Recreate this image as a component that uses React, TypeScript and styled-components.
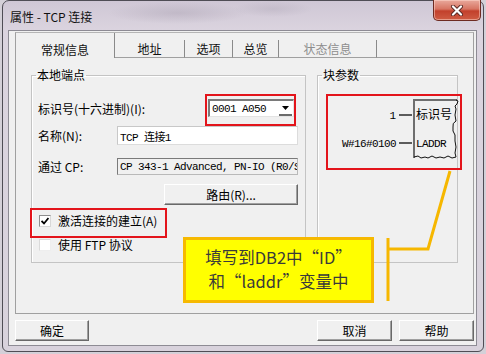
import React from 'react'
import styled, { createGlobalStyle } from 'styled-components'

const GlobalStyle = createGlobalStyle`
  html, body {
    margin: 0;
    padding: 0;
  }
  body {
    width: 486px;
    height: 354px;
    overflow: hidden;
    background: #d4d0d8;
    font-family: "Noto Sans CJK SC", "Noto Sans", sans-serif;
    font-size: 12px;
    color: #000;
  }
`

const Page = styled.div`
  position: relative;
  width: 486px;
  height: 354px;
`

const Window = styled.div`
  box-sizing: border-box;
  width: 482px;
  height: 352px;
  margin-left: 2px;
  border: 1px solid #4f4d55;
  border-radius: 7px 7px 6px 6px;
  background:
    radial-gradient(ellipse 70px 11px at 175px 12px, rgba(120, 110, 130, 0.2), transparent),
    radial-gradient(ellipse 40px 8px at 270px 8px, rgba(120, 110, 130, 0.15), transparent),
    linear-gradient(180deg, #cfc7d5 0%, #dbd4df 30px, #d8d2dc 100%);
  display: flex;
  flex-direction: column;
`

const TitleBar = styled.div`
  display: flex;
  align-items: flex-start;
  height: 29px;
`

const Title = styled.div`
  margin: 8px 0 0 7px;
  font-size: 12px;
  line-height: 16px;
  color: #111;
`

const CloseButton = styled.div`
  margin: -1px 2px 0 auto;
  width: 48px;
  height: 21px;
  box-sizing: border-box;
  border: 1px solid #6e2b22;
  border-top: none;
  border-radius: 0 0 5px 5px;
  background: linear-gradient(180deg, #e9a99c 0%, #d77563 45%, #c2402c 55%, #cf5c43 100%);
  box-shadow: inset 0 0 0 1px rgba(255, 220, 210, 0.5);
  display: flex;
  align-items: center;
  justify-content: center;
`

const Client = styled.div`
  box-sizing: border-box;
  height: 316px;
  margin: 0 6px 0 5px;
  padding: 1px 0 0 6px;
  background: #f0f0f0;
  border: 1px solid #8d8b94;
`

const TabFrame = styled.div`
  box-sizing: border-box;
  width: 459px;
  height: 282px;
  border: 1px solid #a0a0a0;
  border-top-color: #b5b5b5;
  display: flex;
  flex-direction: column;
`

const TabStrip = styled.div`
  display: flex;
  height: 25px;
`

const Tab = styled.div<{ $w: number; $active?: boolean; $disabled?: boolean }>`
  box-sizing: border-box;
  width: ${p => p.$w}px;
  margin-top: ${p => (p.$active ? 0 : 7)}px;
  border-right: 1px solid #8a8a8a;
  border-bottom: ${p => (p.$active ? 'none' : '1px solid #a0a0a0')};
  display: flex;
  align-items: center;
  justify-content: center;
  padding-top: ${p => (p.$active ? 7 : 0)}px;
  font-size: 12px;
  color: ${p => (p.$disabled ? '#8d8d8d' : '#111')};
`

const TabFiller = styled.div`
  flex: 1;
  border-bottom: 1px solid #a0a0a0;
`

const PageBody = styled.div`
  display: flex;
  gap: 11px;
  padding: 9px 0 0 15px;
`

const Group = styled.fieldset<{ $w: number }>`
  box-sizing: border-box;
  width: ${p => p.$w}px;
  height: 196px;
  margin: 0;
  padding: 0 7px 0 6px;
  min-width: 0;
  border: 1px solid #c4c4c4;
  box-shadow: inset 1px 1px 0 #fff;
  display: flex;
  flex-direction: column;
`

const Legend = styled.legend`
  padding: 0 1px;
  margin-left: -2px;
  font-size: 12px;
  line-height: 16px;
`

const Row = styled.div<{ $top: number; $h: number }>`
  display: flex;
  align-items: center;
  height: ${p => p.$h}px;
  margin-top: ${p => p.$top}px;
`

const Label = styled.div`
  width: 79px;
  flex: none;
  white-space: nowrap;
  font-size: 12px;
`

const Combo = styled.div`
  box-sizing: border-box;
  margin: 0 4px 0 auto;
  width: 86px;
  height: 18px;
  background: #fff;
  border-top: 2px solid #7a7a7a;
  border-left: 2px solid #7a7a7a;
  border-right: 1px solid #e3e3e3;
  border-bottom: 1px solid #e3e3e3;
  display: flex;
  align-items: center;
`

const Mono = styled.span`
  font-family: "Liberation Mono", "Noto Sans CJK SC", monospace;
  font-size: 11px;
  letter-spacing: -0.6px;
  white-space: nowrap;
`

const ComboText = styled(Mono)`
  flex: 1;
  padding-left: 2px;
`

const DropButton = styled.div`
  width: 13px;
  height: 14px;
  margin-right: 1px;
  border-bottom: 2px solid #6b6b6b;
  display: flex;
  align-items: center;
  justify-content: center;
  box-sizing: border-box;
`

const TextBox = styled.div<{ $readonly?: boolean }>`
  box-sizing: border-box;
  width: 181px;
  height: 100%;
  padding-left: 2px;
  display: flex;
  align-items: center;
  overflow: hidden;
  background: ${p => (p.$readonly ? '#f0f0f0' : '#fff')};
  border: 1px solid ${p => (p.$readonly ? '#b9b9b9' : '#dcdcdc')};
  border-top-color: ${p => (p.$readonly ? '#7a7a7a' : '#c8c8c8')};
  border-left-color: ${p => (p.$readonly ? '#7a7a7a' : '#c8c8c8')};
`

const PushButton = styled.div<{ $w: number }>`
  box-sizing: border-box;
  width: ${p => p.$w}px;
  height: 21px;
  background: #f0f0f0;
  border-top: 1px solid #fff;
  border-left: 1px solid #fff;
  border-right: 1px solid #696969;
  border-bottom: 1px solid #696969;
  box-shadow: inset -1px -1px 0 #a0a0a0;
  display: flex;
  align-items: center;
  justify-content: center;
  font-size: 12px;
`

const RouteButton = styled(PushButton)`
  margin-left: auto;
`

const CheckBox = styled.span<{ $faded?: boolean }>`
  box-sizing: border-box;
  width: 12px;
  height: 12px;
  margin: 0 7px 0 1px;
  background: #fff;
  border: 1px solid ${p => (p.$faded ? '#dadada' : '#8e8e8e')};
  border-bottom-color: ${p => (p.$faded ? '#eeeeee' : '#d8d8d8')};
  border-right-color: ${p => (p.$faded ? '#eeeeee' : '#d8d8d8')};
  display: flex;
  align-items: center;
  justify-content: center;
`

const CheckLabel = styled.span`
  font-size: 12px;
  white-space: nowrap;
`

const Diagram = styled.svg`
  display: block;
  width: 139px;
  height: 85px;
  margin-left: -1px;
`

const ButtonRow = styled.div`
  display: flex;
  gap: 7px;
  width: 459px;
  margin-top: 6px;
`

const Spacer = styled.div`
  flex: 1;
`

const Annotations = styled.svg`
  position: absolute;
  left: 0;
  top: 0;
  width: 486px;
  height: 354px;
  pointer-events: none;
`

const Callout = styled.div`
  position: absolute;
  left: 183px;
  top: 237px;
  box-sizing: border-box;
  width: 191px;
  height: 66px;
  padding-bottom: 3px;
  background: #ffff00;
  border: 3px solid #f6b900;
  display: flex;
  flex-direction: column;
  align-items: center;
  justify-content: center;
  font-size: 16.5px;
  line-height: 24px;
  color: #3a3a3a;
`

const CalloutLine = styled.div`
  white-space: nowrap;
`

const tabs = [
  { label: '常规信息', w: 99, active: true },
  { label: '地址', w: 70 },
  { label: '选项', w: 48 },
  { label: '总览', w: 46 },
  { label: '状态信息', w: 98, disabled: true },
]

const App: React.FC = () => {
  return (
    <Page>
      <GlobalStyle />
      <Window>
        <TitleBar>
          <Title>属性 - TCP 连接</Title>
          <CloseButton>
            <svg width="14" height="11" viewBox="0 0 14 11">
              <path d="M3 1.5 L11 9.5 M11 1.5 L3 9.5" stroke="#5a2a25" strokeWidth="4" strokeLinecap="round" />
              <path d="M3 1.5 L11 9.5 M11 1.5 L3 9.5" stroke="#fff" strokeWidth="2.2" strokeLinecap="round" />
            </svg>
          </CloseButton>
        </TitleBar>
        <Client>
          <TabFrame>
            <TabStrip>
              {tabs.map(t => (
                <Tab key={t.label} $w={t.w} $active={t.active} $disabled={t.disabled}>
                  {t.label}
                </Tab>
              ))}
              <TabFiller />
            </TabStrip>
            <PageBody>
              <Group $w={275}>
                <Legend>本地端点</Legend>
                <Row $top={16} $h={18}>
                  <Label>标识号(十六进制)(I):</Label>
                  <Combo>
                    <ComboText>0001 A050</ComboText>
                    <DropButton>
                      <svg width="7" height="4" viewBox="0 0 7 4">
                        <path d="M0 0 H7 L3.5 4 Z" fill="#000" />
                      </svg>
                    </DropButton>
                  </Combo>
                </Row>
                <Row $top={9} $h={19}>
                  <Label>名称(N):</Label>
                  <TextBox>
                    <Mono>TCP 连接1</Mono>
                  </TextBox>
                </Row>
                <Row $top={13} $h={17}>
                  <Label>通过 CP:</Label>
                  <TextBox $readonly>
                    <Mono>CP 343-1 Advanced, PN-IO (R0/S</Mono>
                  </TextBox>
                </Row>
                <Row $top={9} $h={21}>
                  <RouteButton $w={134}>路由(R)...</RouteButton>
                </Row>
                <Row $top={9} $h={13}>
                  <CheckBox>
                    <svg width="8" height="8" viewBox="0 0 8 8">
                      <path d="M0.5 4 L3 6.5 L7.5 1" stroke="#000" strokeWidth="1.8" fill="none" />
                    </svg>
                  </CheckBox>
                  <CheckLabel>激活连接的建立(A)</CheckLabel>
                </Row>
                <Row $top={11} $h={13}>
                  <CheckBox $faded />
                  <CheckLabel>使用 FTP 协议</CheckLabel>
                </Row>
              </Group>
              <Group $w={141}>
                <Legend>块参数</Legend>
                <Diagram viewBox="0 0 139 85">
                  <text x="73" y="36" textAnchor="end" fontFamily="Liberation Mono, monospace" fontSize="11">1</text>
                  <text x="73" y="64" textAnchor="end" fontFamily="Liberation Mono, monospace" fontSize="11" letterSpacing="-0.6">W#16#0100</text>
                  <path d="M76 32 H89 M76 60 H89" stroke="#5c5c5c" strokeWidth="2" />
                  <path d="M91 75 V17 H134" stroke="#6e6e6e" strokeWidth="2" fill="none" />
                  <path
                    d="M133 17 L135 18 L134 21 L132 23 L133 26 L132 32 L133 38 Q129 40 130 44 Q129 48 132 52 L132 58 L133 64 L132 70 L133 74"
                    stroke="#111"
                    strokeWidth="1"
                    fill="none"
                  />
                  <path
                    d="M91 74 L95 73 L98 75 L102 74 L105 75 L109 73 L113 75 L117 74 L121 75 L125 73 L129 75 L133 74"
                    stroke="#111"
                    strokeWidth="1"
                    fill="none"
                  />
                  <text x="93" y="36" fontFamily="Noto Sans CJK SC, sans-serif" fontSize="12">标识号</text>
                  <text x="93" y="64" fontFamily="Liberation Mono, monospace" fontSize="11" letterSpacing="-0.6">LADDR</text>
                </Diagram>
              </Group>
            </PageBody>
          </TabFrame>
          <ButtonRow>
            <PushButton $w={74}>确定</PushButton>
            <Spacer />
            <PushButton $w={75}>取消</PushButton>
            <PushButton $w={75}>帮助</PushButton>
          </ButtonRow>
        </Client>
      </Window>
      <Annotations viewBox="0 0 486 354">
        <g stroke="#e3141b" strokeWidth="2" fill="none">
          <rect x="206" y="95" width="89" height="30" />
          <rect x="31" y="209" width="135" height="28" />
          <rect x="327" y="95" width="134" height="74" />
        </g>
        <g stroke="#f6b700" strokeWidth="3" fill="none">
          <polyline points="450,171 428,249 389,249" />
          <line x1="388" y1="238" x2="388" y2="301" />
        </g>
      </Annotations>
      <Callout>
        <CalloutLine>填写到DB2中“ID”</CalloutLine>
        <CalloutLine>和“laddr”变量中</CalloutLine>
      </Callout>
    </Page>
  )
}

export default App
